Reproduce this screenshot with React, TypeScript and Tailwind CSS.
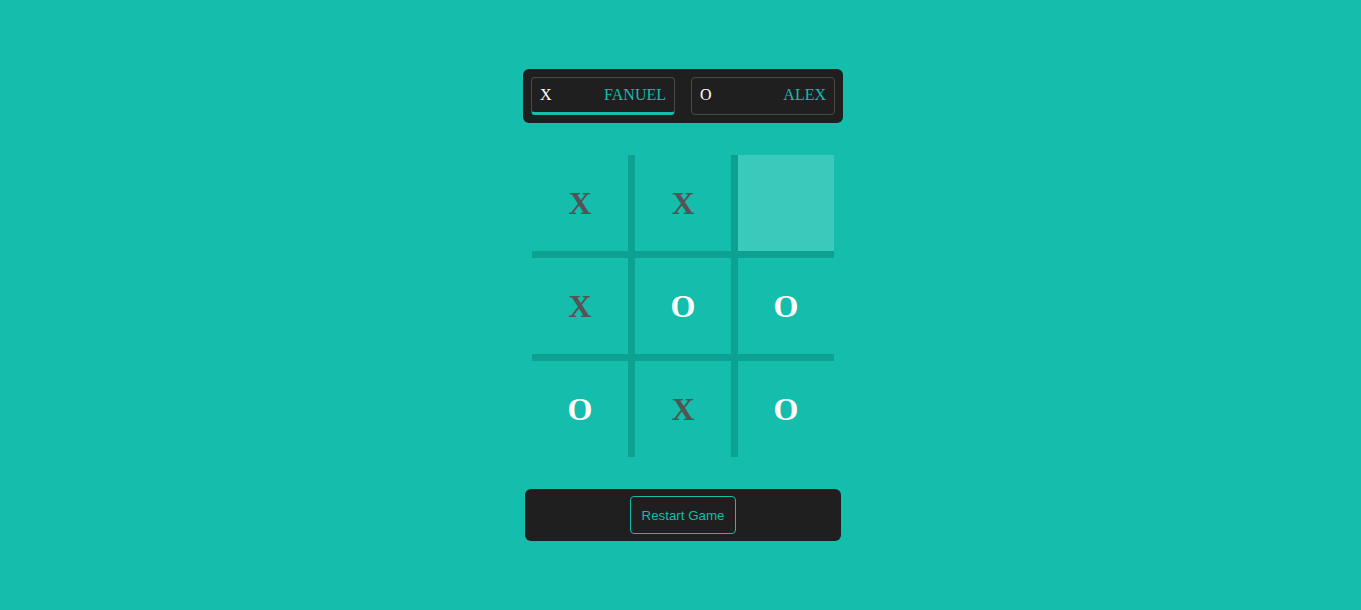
import { useState } from 'react';

type Mark = 'X' | 'O' | null;

const initialBoard: Mark[] = ['X', 'X', null, 'X', 'O', 'O', 'O', 'X', 'O'];

const serif = { fontFamily: '"Liberation Serif", "Times New Roman", serif' };

function PlayerBox({ mark, name, active }: { mark: string; name: string; active: boolean }) {
    return (
        <div
            className={`flex h-[38px] w-[144px] items-center justify-between rounded-[4px] border border-[#4a4a4a] px-2 text-base ${
                active ? 'border-b-[3px] border-b-[#14bdac]' : 'pb-[2px]'
            }`}
            style={serif}
        >
            <span className="text-white">{mark}</span>
            <span className="text-[#14bdac]">{name}</span>
        </div>
    );
}

export default function App() {
    const [board, setBoard] = useState<Mark[]>(initialBoard);
    const [hover, setHover] = useState<number | null>(2);

    return (
        <div className="flex min-h-[610px] w-full flex-col items-center bg-[#14bdac] pl-[5px] pt-[69px]">
            <div className="flex w-[320px] gap-4 rounded-[6px] bg-[#1f1f1f] p-2">
                <PlayerBox mark="X" name="FANUEL" active />
                <PlayerBox mark="O" name="ALEX" active={false} />
            </div>

            <div className="mt-8 grid w-[302px] grid-cols-3 gap-[7px] bg-[#0da192]">
                {board.map((cell, i) => (
                    <button
                        key={i}
                        onMouseEnter={() => setHover(i)}
                        onClick={() => {
                            if (cell) return;
                            const next = [...board];
                            next[i] = 'X';
                            setBoard(next);
                        }}
                        className={`flex h-24 w-24 items-center justify-center text-[32px] font-bold ${
                            !cell && hover === i ? 'bg-[#3ac9bb]' : 'bg-[#14bdac]'
                        } ${cell === 'X' ? 'text-[#545454]' : 'text-white'}`}
                        style={serif}
                    >
                        {cell}
                    </button>
                ))}
            </div>

            <div className="mt-8 flex w-[316px] justify-center rounded-[6px] bg-[#1f1f1f] py-[7px]">
                <button
                    onClick={() => setBoard(Array(9).fill(null))}
                    className="h-[38px] w-[106px] rounded-[4px] border border-[#14bdac] pt-px text-[13.333px] text-[#14bdac]"
                    style={{ fontFamily: '"Liberation Sans", Arial, sans-serif' }}
                >
                    Restart Game
                </button>
            </div>
        </div>
    );
}
